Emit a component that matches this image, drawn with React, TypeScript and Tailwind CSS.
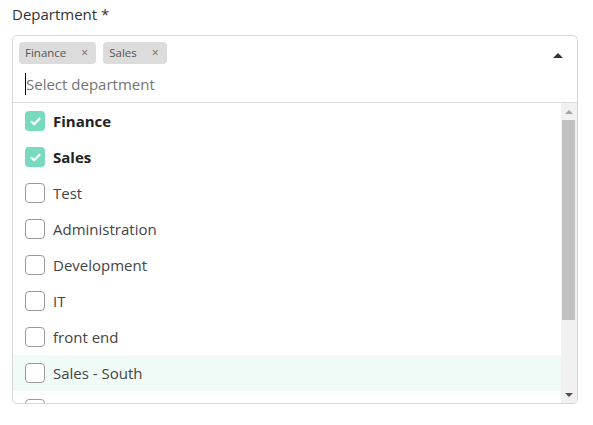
const options = [
  { name: "Finance", checked: true },
  { name: "Sales", checked: true },
  { name: "Test", checked: false },
  { name: "Administration", checked: false },
  { name: "Development", checked: false },
  { name: "IT", checked: false },
  { name: "front end", checked: false },
  { name: "Sales - South", checked: false, active: true },
];

function Chip({ label }: { label: string }) {
  return (
    <span className="flex h-[22px] items-center gap-[15px] rounded-[4px] bg-[#dcdcdc] pl-[6px] pr-[8px] text-[11.5px] text-[#555]">
      {label}
      <span className="text-[12px] leading-none text-[#666]">×</span>
    </span>
  );
}

function Checkbox({ checked }: { checked: boolean }) {
  if (checked) {
    return (
      <span className="flex h-5 w-5 shrink-0 items-center justify-center rounded-[4px] bg-[#78dabe]">
        <svg width="11" height="9" viewBox="0 0 11 9" fill="none">
          <path d="M1.5 4.8 4.2 7.3 9.5 1.7" stroke="white" strokeWidth="2.2" strokeLinecap="round" strokeLinejoin="round" />
        </svg>
      </span>
    );
  }
  return <span className="h-5 w-5 shrink-0 rounded-[4px] border border-[#9a9a9a] bg-white" />;
}

export default function App() {
  return (
    <div className="h-[425px] w-[593px] bg-white px-3 pt-[5px] font-['Open_Sans',sans-serif]">
      <label className="block text-[15px] leading-[18px] text-[#333]">Department *</label>
      <div className="mt-[12px] w-[566px] overflow-hidden rounded-[5px] border border-[#d6d6d6]">
        <div className="flex border-b border-[#dcdcdc]">
          <div className="flex-1 px-[6px] pt-[6px]">
            <div className="flex gap-[7px]">
              <Chip label="Finance" />
              <Chip label="Sales" />
            </div>
            <div className="flex h-[38px] items-center pl-[6px] pt-[2px]">
              <span className="h-[22px] w-px bg-black" />
              <span className="text-[15px] text-[#757575]">Select department</span>
            </div>
          </div>
          <div className="flex w-[38px] justify-center pt-[17px]">
            <span className="h-0 w-0 border-x-[5px] border-b-[5px] border-x-transparent border-b-[#333]" />
          </div>
        </div>
        <div className="flex h-[300px]">
          <div className="flex-1 overflow-hidden">
            {options.map((o) => (
              <div
                key={o.name}
                className={`flex h-9 items-center gap-2 pl-3 ${o.active ? "bg-[#f0faf7]" : ""}`}
              >
                <Checkbox checked={o.checked} />
                <span
                  className={`text-[15px] ${o.checked ? "font-bold text-[#222]" : "text-[#444]"}`}
                >
                  {o.name}
                </span>
              </div>
            ))}
            <div className="flex h-9 items-center pl-3">
              <Checkbox checked={false} />
            </div>
          </div>
          <div className="flex w-[16px] flex-col items-center bg-[#f1f1f1] pr-px">
            <div className="flex h-[17px] items-center justify-center">
              <span className="h-0 w-0 border-x-[4px] border-b-[4px] border-x-transparent border-b-[#a3a3a3]" />
            </div>
            <div className="h-[200px] w-[13px] bg-[#c1c1c1]" />
            <div className="flex-1" />
            <div className="flex h-[17px] items-center justify-center">
              <span className="h-0 w-0 border-x-[4px] border-t-[4px] border-x-transparent border-t-[#505050]" />
            </div>
          </div>
        </div>
      </div>
    </div>
  );
}
